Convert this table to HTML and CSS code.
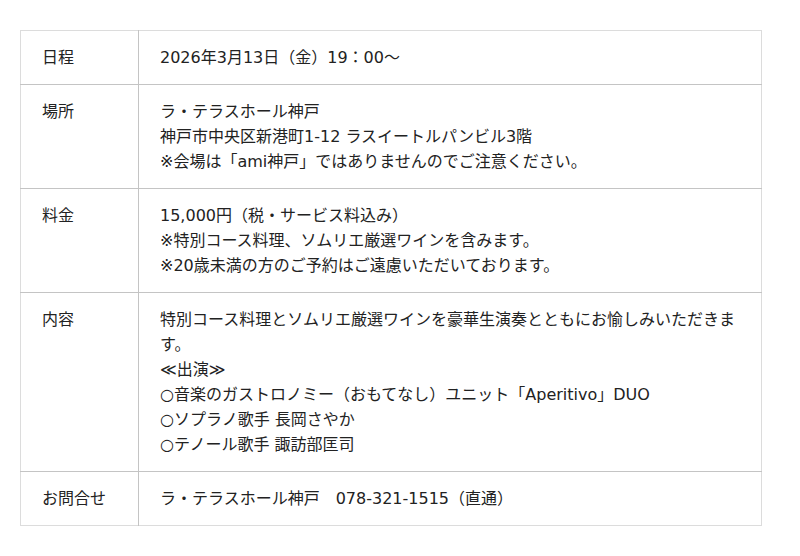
FILE: index.html
```html
<!DOCTYPE html>
<html lang="ja">
<head>
<meta charset="utf-8">
<link rel="stylesheet" href="styles.css">
</head>
<body>
<div class="wrap">
<table class="info">
<tr><th>日程</th><td>2026年3月13日（金）19：00〜</td></tr>
<tr><th>場所</th><td>ラ・テラスホール神戸<br>神戸市中央区新港町1-12 ラスイートルパンビル3階<br>※会場は「ami神戸」ではありませんのでご注意ください。</td></tr>
<tr><th>料金</th><td>15,000円（税・サービス料込み）<br>※特別コース料理、ソムリエ厳選ワインを含みます。<br>※20歳未満の方のご予約はご遠慮いただいております。</td></tr>
<tr><th>内容</th><td>特別コース料理とソムリエ厳選ワインを豪華生演奏とともにお愉しみいただきます。<br>≪出演≫<br>○音楽のガストロノミー（おもてなし）ユニット「Aperitivo」DUO<br>○ソプラノ歌手 長岡さやか<br>○テノール歌手 諏訪部匡司</td></tr>
<tr><th>お問合せ</th><td>ラ・テラスホール神戸　078-321-1515（直通）</td></tr>
</table>
</div>
</body>
</html>
```

FILE: styles.css
```css
html, body {
  margin: 0;
  padding: 0;
  background: #fff;
}
.wrap {
  padding: 30px 38px 0 20px;
}
.info {
  width: 742px;
  border-collapse: collapse;
  font-family: "DejaVu Sans", "Noto Sans CJK JP", sans-serif;
  font-size: 16px;
  line-height: 25px;
  color: #222;
  border: 1px solid #dcdcdc;
}
.info th,
.info td {
  text-align: left;
  vertical-align: top;
  font-weight: normal;
  padding: 14px 21px;
  border-top: 1px solid #c4c4c4;
}
.info tr:first-child th,
.info tr:first-child td {
  border-top: 1px solid #dcdcdc;
}
.info th {
  width: 75px;
  border-right: 1px solid #c4c4c4;
}
```
